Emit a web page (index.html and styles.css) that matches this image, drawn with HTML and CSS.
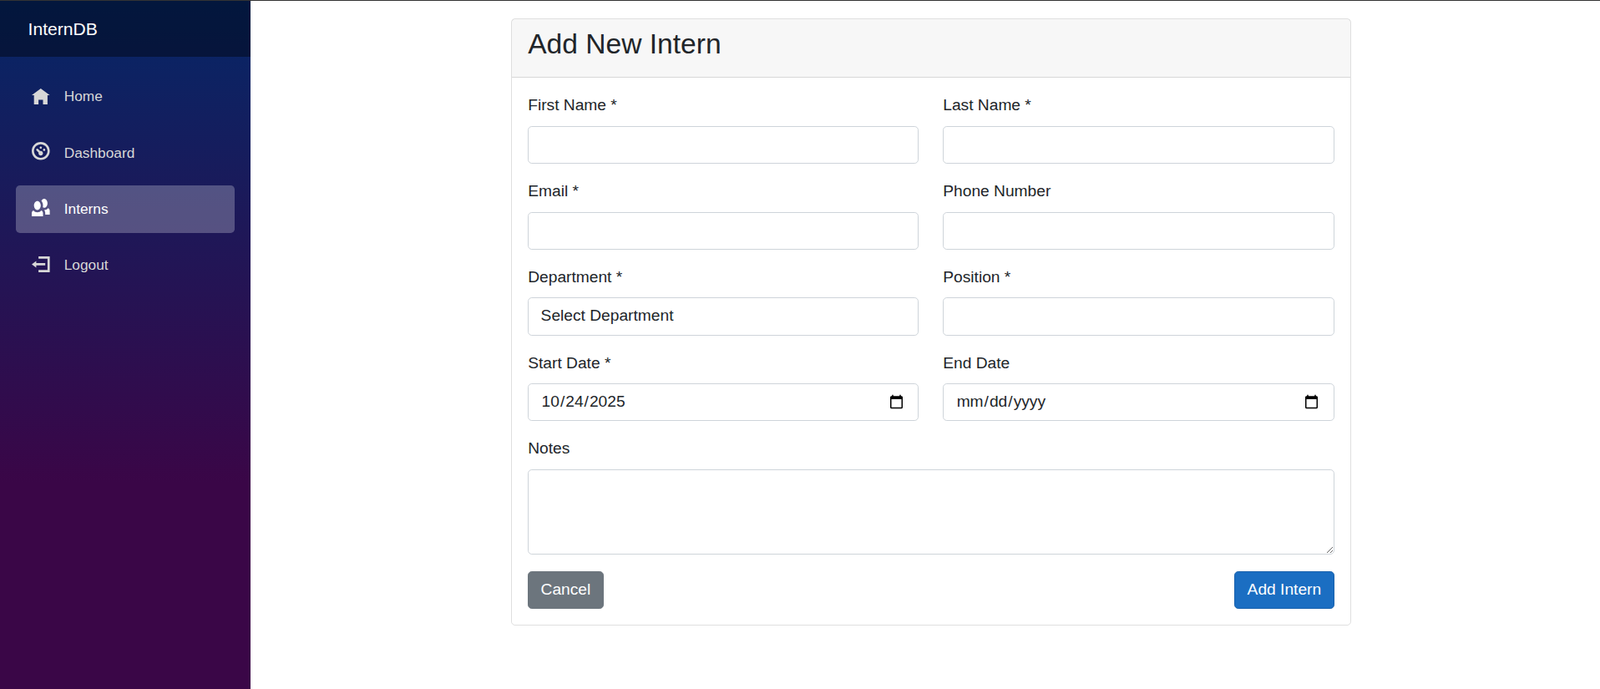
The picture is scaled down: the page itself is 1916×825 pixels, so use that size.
FILE: index.html
```html
<!DOCTYPE html>
<html lang="en">
<head>
<meta charset="utf-8">
<title>InternDB</title>
<link rel="stylesheet" href="styles.css">
</head>
<body>
<div class="strip"></div>
<div class="page">
  <aside class="sidebar">
    <div class="brand-row"><a class="brand" href="#">InternDB</a></div>
    <nav class="nav">
      <a class="nav-link" href="#"><svg class="oi oi-home" viewBox="0 0 8 8"><path d="M4 0l-4 3h1v4h2v-2h2v2h2v-4.03l1 .03-4-3z"/></svg>Home</a>
      <a class="nav-link" href="#"><svg class="oi oi-dash" viewBox="0 0 8 8"><path d="M4 0c-2.2 0-4 1.8-4 4s1.8 4 4 4 4-1.8 4-4-1.8-4-4-4zm0 1c1.66 0 3 1.34 3 3s-1.34 3-3 3-3-1.34-3-3 1.34-3 3-3zm0 1c-.28 0-.5.22-.5.5s.22.5.5.5.5-.22.5-.5-.22-.5-.5-.5zm-1.66 1a.5.5 0 0 0-.19.84l.91.91c-.02.08-.06.16-.06.25 0 .55.45 1 1 1s1-.45 1-1-.45-1-1-1c-.09 0-.17.04-.25.06l-.91-.91a.5.5 0 0 0-.44-.16.5.5 0 0 0-.06 0zm3.16 0c-.28 0-.5.22-.5.5s.22.5.5.5.5-.22.5-.5-.22-.5-.5-.5z"/></svg>Dashboard</a>
      <a class="nav-link active" href="#"><svg class="oi oi-people" viewBox="0 0 8 8"><path d="M5.5 0c-.51 0-.95.35-1.22.88.45.54.72 1.28.72 2.13 0 .29-.03.55-.09.81.19.11.38.19.59.19.83 0 1.5-.9 1.5-2s-.67-2-1.5-2zm-3 1c-.83 0-1.5.9-1.5 2s.67 2 1.5 2 1.5-.9 1.5-2-.67-2-1.5-2zm4.75 3.16c-.43.51-1.02.82-1.69.84.27.38.44.84.44 1.34v.66h2v-1.66c0-.52-.31-.97-.75-1.19zm-6.5 1c-.44.22-.75.67-.75 1.19v1.66h5v-1.66c0-.52-.31-.97-.75-1.19-.45.53-1.06.84-1.75.84s-1.3-.32-1.75-.84z"/></svg>Interns</a>
      <a class="nav-link" href="#"><svg class="oi oi-logout" viewBox="0 0 8 8"><path d="M3 0v1h4v5h-4v1h5v-7h-5zm-1 2l-2 1.5 2 1.5v-1h4v-1h-4v-1z"/></svg>Logout</a>
    </nav>
  </aside>
  <main class="main">
    <section class="card">
      <header class="card-header"><h3 class="card-title">Add New Intern</h3></header>
      <form class="card-body">
        <div class="grid">
          <div class="field"><label class="label" for="first">First Name *</label><input class="control" id="first" type="text"></div>
          <div class="field"><label class="label" for="last">Last Name *</label><input class="control" id="last" type="text"></div>
          <div class="field"><label class="label" for="email">Email *</label><input class="control" id="email" type="email"></div>
          <div class="field"><label class="label" for="phone">Phone Number</label><input class="control" id="phone" type="tel"></div>
          <div class="field"><label class="label" for="dept">Department *</label><select class="control select" id="dept"><option>Select Department</option></select></div>
          <div class="field"><label class="label" for="pos">Position *</label><input class="control" id="pos" type="text"></div>
          <div class="field"><label class="label" for="start">Start Date *</label><input class="control" id="start" type="date" value="2025-10-24"></div>
          <div class="field"><label class="label" for="end">End Date</label><input class="control" id="end" type="date"></div>
        </div>
        <div class="field"><label class="label" for="notes">Notes</label><textarea class="control textarea" id="notes"></textarea></div>
        <div class="actions">
          <button class="btn btn-cancel" type="button">Cancel</button>
          <button class="btn btn-primary" type="submit">Add Intern</button>
        </div>
      </form>
    </section>
  </main>
</div>
</body>
</html>
```

FILE: styles.css
```css
* { box-sizing: border-box; }
html, body { height: 100%; }
body {
  margin: 0;
  display: flex;
  flex-direction: column;
  background: #fff;
  color: #212529;
  font-family: "Liberation Sans", Arial, Helvetica, sans-serif;
  font-size: 19.2px;
  line-height: 1.5;
}
.strip { height: 1px; background: #333; flex: none; }
.page { flex: 1; display: flex; min-height: 0; }
.sidebar {
  width: 300px;
  flex: none;
  background-image: linear-gradient(180deg, rgb(5, 39, 103) 0%, #3a0647 70%);
}
.brand-row {
  height: 67.2px;
  display: flex;
  align-items: center;
  padding-left: 33.6px;
  background: rgba(0, 0, 0, 0.4);
}
.brand { color: #fff; font-size: 21.12px; text-decoration: none; }
.nav {
  display: flex;
  flex-direction: column;
  gap: 9.8px;
  padding: 19.45px 19.2px 0;
}
.nav-link {
  display: flex;
  align-items: center;
  height: 57.4px;
  padding-left: 19.2px;
  border-radius: 4.8px;
  color: #d7d7d7;
  font-size: 17.28px;
  text-decoration: none;
}
.nav-link.active { background: rgba(255, 255, 255, 0.25); color: #fff; }
.oi {
  width: 21.6px;
  height: 21.6px;
  margin-right: 16.8px;
  flex: none;
  fill: currentColor;
}
.oi-dash { margin-top: -5px; }
.oi-people { margin-top: -4px; }
.main { flex: 1; min-width: 0; padding: 21.12px 298.3px 0 312px; }
.card { border: 1px solid rgba(0, 0, 0, 0.125); border-radius: 4.8px; }
.card-header {
  padding: 9.6px 19.2px;
  background: rgba(0, 0, 0, 0.03);
  border-bottom: 1px solid rgba(0, 0, 0, 0.125);
}
.card-title {
  margin: 0 0 9.6px;
  font-size: 33.6px;
  font-weight: 500;
  line-height: 1.2;
}
.card-body { padding: 19.2px; }
.grid { display: grid; grid-template-columns: 1fr 1fr; column-gap: 28.8px; }
.field { margin-bottom: 19.2px; }
.label { display: block; margin-bottom: 9.6px; }
.control {
  display: block;
  width: 100%;
  height: 45.2px;
  padding: 7.2px 14.4px;
  border: 1px solid #ced4da;
  border-radius: 4.8px;
  background: #fff;
  color: #212529;
  font: inherit;
}
.select { appearance: none; padding-top: 6.6px; padding-bottom: 7.8px; }
.textarea { height: 102.6px; }
.actions { display: flex; justify-content: space-between; }
.btn {
  height: 45.2px;
  padding: 7.2px 14.4px;
  border: 1px solid transparent;
  border-radius: 4.8px;
  color: #fff;
  font: inherit;
}
.btn-cancel { background: #6c757d; border-color: #6c757d; }
.btn-primary { background: #1b6ec2; border-color: #1861ac; }
```
